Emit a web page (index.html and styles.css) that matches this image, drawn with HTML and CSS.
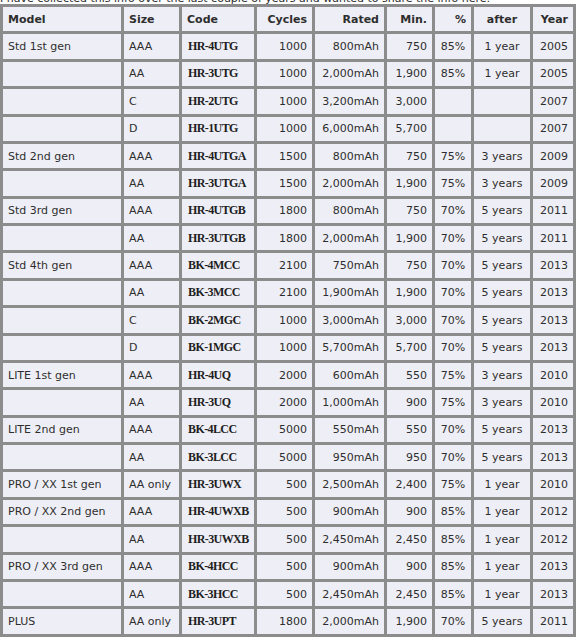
FILE: index.html
```html
<!DOCTYPE html>
<html>
<head>
<meta charset="utf-8">
<link rel="stylesheet" href="styles.css">
</head>
<body>
<p class="intro">I have collected this info over the last couple of years and wanted to share the info here:</p>
<table class="batt">
<colgroup>
<col class="c1"><col class="c2"><col class="c3"><col class="c4"><col class="c5"><col class="c6"><col class="c7"><col class="c8"><col class="c9">
</colgroup>
<thead>
<tr><th class="l">Model</th><th class="l">Size</th><th class="l">Code</th><th class="r">Cycles</th><th class="r">Rated</th><th class="r">Min.</th><th class="r">%</th><th class="c">after</th><th class="r">Year</th></tr>
</thead>
<tbody>
<tr><td>Std 1st gen</td><td>AAA</td><td class="code">HR-4UTG</td><td class="r">1000</td><td class="r">800mAh</td><td class="r">750</td><td class="c">85%</td><td class="c">1 year</td><td class="r">2005</td></tr>
<tr><td></td><td>AA</td><td class="code">HR-3UTG</td><td class="r">1000</td><td class="r">2,000mAh</td><td class="r">1,900</td><td class="c">85%</td><td class="c">1 year</td><td class="r">2005</td></tr>
<tr><td></td><td>C</td><td class="code">HR-2UTG</td><td class="r">1000</td><td class="r">3,200mAh</td><td class="r">3,000</td><td class="c"></td><td class="c"></td><td class="r">2007</td></tr>
<tr><td></td><td>D</td><td class="code">HR-1UTG</td><td class="r">1000</td><td class="r">6,000mAh</td><td class="r">5,700</td><td class="c"></td><td class="c"></td><td class="r">2007</td></tr>
<tr><td>Std 2nd gen</td><td>AAA</td><td class="code">HR-4UTGA</td><td class="r">1500</td><td class="r">800mAh</td><td class="r">750</td><td class="c">75%</td><td class="c">3 years</td><td class="r">2009</td></tr>
<tr><td></td><td>AA</td><td class="code">HR-3UTGA</td><td class="r">1500</td><td class="r">2,000mAh</td><td class="r">1,900</td><td class="c">75%</td><td class="c">3 years</td><td class="r">2009</td></tr>
<tr><td>Std 3rd gen</td><td>AAA</td><td class="code">HR-4UTGB</td><td class="r">1800</td><td class="r">800mAh</td><td class="r">750</td><td class="c">70%</td><td class="c">5 years</td><td class="r">2011</td></tr>
<tr><td></td><td>AA</td><td class="code">HR-3UTGB</td><td class="r">1800</td><td class="r">2,000mAh</td><td class="r">1,900</td><td class="c">70%</td><td class="c">5 years</td><td class="r">2011</td></tr>
<tr><td>Std 4th gen</td><td>AAA</td><td class="code">BK-4MCC</td><td class="r">2100</td><td class="r">750mAh</td><td class="r">750</td><td class="c">70%</td><td class="c">5 years</td><td class="r">2013</td></tr>
<tr><td></td><td>AA</td><td class="code">BK-3MCC</td><td class="r">2100</td><td class="r">1,900mAh</td><td class="r">1,900</td><td class="c">70%</td><td class="c">5 years</td><td class="r">2013</td></tr>
<tr><td></td><td>C</td><td class="code">BK-2MGC</td><td class="r">1000</td><td class="r">3,000mAh</td><td class="r">3,000</td><td class="c">70%</td><td class="c">5 years</td><td class="r">2013</td></tr>
<tr><td></td><td>D</td><td class="code">BK-1MGC</td><td class="r">1000</td><td class="r">5,700mAh</td><td class="r">5,700</td><td class="c">70%</td><td class="c">5 years</td><td class="r">2013</td></tr>
<tr><td>LITE 1st gen</td><td>AAA</td><td class="code">HR-4UQ</td><td class="r">2000</td><td class="r">600mAh</td><td class="r">550</td><td class="c">75%</td><td class="c">3 years</td><td class="r">2010</td></tr>
<tr><td></td><td>AA</td><td class="code">HR-3UQ</td><td class="r">2000</td><td class="r">1,000mAh</td><td class="r">900</td><td class="c">75%</td><td class="c">3 years</td><td class="r">2010</td></tr>
<tr><td>LITE 2nd gen</td><td>AAA</td><td class="code">BK-4LCC</td><td class="r">5000</td><td class="r">550mAh</td><td class="r">550</td><td class="c">70%</td><td class="c">5 years</td><td class="r">2013</td></tr>
<tr><td></td><td>AA</td><td class="code">BK-3LCC</td><td class="r">5000</td><td class="r">950mAh</td><td class="r">950</td><td class="c">70%</td><td class="c">5 years</td><td class="r">2013</td></tr>
<tr><td>PRO / XX 1st gen</td><td>AA only</td><td class="code">HR-3UWX</td><td class="r">500</td><td class="r">2,500mAh</td><td class="r">2,400</td><td class="c">75%</td><td class="c">1 year</td><td class="r">2010</td></tr>
<tr><td>PRO / XX 2nd gen</td><td>AAA</td><td class="code">HR-4UWXB</td><td class="r">500</td><td class="r">900mAh</td><td class="r">900</td><td class="c">85%</td><td class="c">1 year</td><td class="r">2012</td></tr>
<tr><td></td><td>AA</td><td class="code">HR-3UWXB</td><td class="r">500</td><td class="r">2,450mAh</td><td class="r">2,450</td><td class="c">85%</td><td class="c">1 year</td><td class="r">2012</td></tr>
<tr><td>PRO / XX 3rd gen</td><td>AAA</td><td class="code">BK-4HCC</td><td class="r">500</td><td class="r">900mAh</td><td class="r">900</td><td class="c">85%</td><td class="c">1 year</td><td class="r">2013</td></tr>
<tr><td></td><td>AA</td><td class="code">BK-3HCC</td><td class="r">500</td><td class="r">2,450mAh</td><td class="r">2,450</td><td class="c">85%</td><td class="c">1 year</td><td class="r">2013</td></tr>
<tr><td>PLUS</td><td>AA only</td><td class="code">HR-3UPT</td><td class="r">1800</td><td class="r">2,000mAh</td><td class="r">1,900</td><td class="c">70%</td><td class="c">5 years</td><td class="r">2011</td></tr>
</tbody>
</table>
</body>
</html>
```
FILE: styles.css
```css
html, body {
  margin: 0;
  padding: 0;
  background: #ffffff;
}
body {
  font-family: "DejaVu Sans", Verdana, sans-serif;
  font-size: 11px;
  color: #2e2e2e;
  overflow: hidden;
}
.intro {
  margin: -8px 0 0 0;
  height: 12px;
  line-height: 13px;
  white-space: nowrap;
}
.batt {
  table-layout: fixed;
  width: 576px;
  border-collapse: separate;
  border-spacing: 0;
  border-left: 3px solid #8c8c8c;
  border-top: 3px solid #8c8c8c;
}
.c1 { width: 121px; }
.c2 { width: 58px; }
.c3 { width: 75px; }
.c4 { width: 58px; }
.c5 { width: 72px; }
.c6 { width: 48px; }
.c7 { width: 39px; }
.c8 { width: 59px; }
.c9 { width: 43px; }
.batt th,
.batt td {
  box-sizing: border-box;
  height: 27.38px;
  padding: 0 5px;
  background: #eeeff6;
  border-right: 3px solid #8c8c8c;
  border-bottom: 3px solid #8c8c8c;
  text-align: left;
  white-space: nowrap;
  overflow: hidden;
  vertical-align: middle;
}
.batt th {
  font-weight: bold;
}
.batt .r { text-align: right; }
.batt .c { text-align: center; }
.batt .l { text-align: left; }
.batt .code {
  padding-left: 6px;
  font-family: "Liberation Serif", "Times New Roman", serif;
  font-weight: bold;
  font-size: 12px;
  letter-spacing: -0.6px;
  color: #1e1e1e;
}
```
